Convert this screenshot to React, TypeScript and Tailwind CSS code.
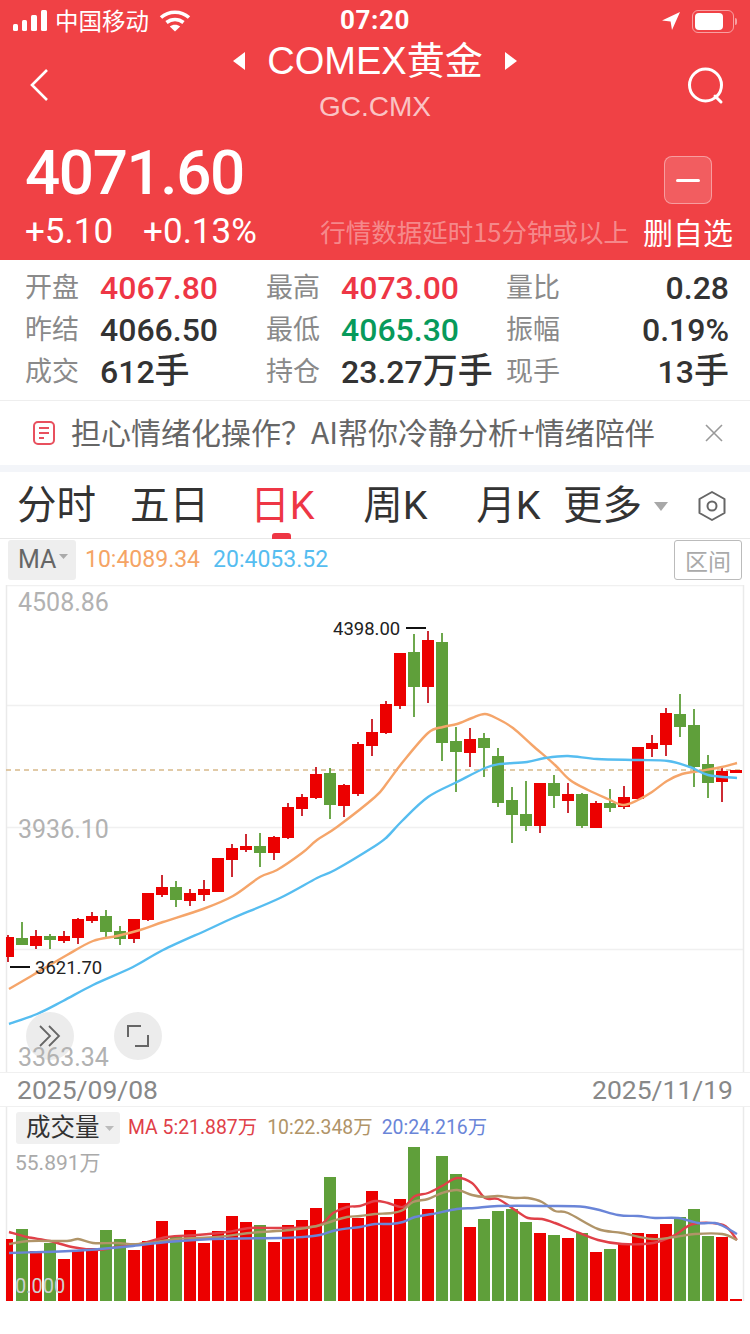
import React from "react";

const RED = "#ec0000";
const GREEN = "#5f9f3a";

// x = 8 + 14 * index; [up, wickTop, bodyTop, bodyBottom, wickBottom]
const candles: [number, number, number, number, number][] = [
  [1, 935, 937, 957, 962], [0, 922, 938, 945, 945], [1, 930, 936, 946, 949], [0, 934, 936, 940, 949],
  [1, 931, 936, 941, 943], [1, 918, 919, 938, 944], [1, 912, 916, 921, 923], [0, 910, 916, 932, 937],
  [0, 926, 931, 939, 945], [1, 919, 919, 939, 943], [1, 893, 893, 920, 921], [1, 875, 887, 895, 897],
  [0, 881, 887, 900, 907], [1, 889, 893, 901, 906], [1, 880, 889, 895, 901], [1, 858, 858, 892, 892],
  [1, 844, 848, 860, 877], [1, 834, 846, 850, 852], [0, 833, 846, 853, 867], [1, 836, 837, 853, 860],
  [1, 803, 807, 838, 839], [1, 794, 797, 809, 816], [1, 767, 774, 798, 799], [0, 768, 773, 805, 819],
  [1, 784, 785, 806, 817], [1, 742, 744, 794, 796], [1, 719, 732, 746, 756], [1, 701, 704, 733, 734],
  [1, 653, 653, 706, 709], [0, 634, 652, 687, 717], [1, 631, 640, 687, 703], [0, 633, 642, 743, 761],
  [0, 727, 741, 752, 792], [1, 728, 739, 753, 767], [0, 733, 738, 748, 777], [0, 748, 756, 803, 807],
  [0, 787, 800, 815, 843], [0, 781, 814, 826, 831], [1, 783, 783, 826, 833], [0, 775, 783, 796, 808],
  [1, 783, 794, 801, 813], [0, 793, 794, 826, 828], [1, 801, 803, 828, 828], [0, 789, 803, 808, 812],
  [1, 786, 797, 807, 809], [1, 747, 747, 799, 800], [1, 735, 743, 749, 757], [1, 708, 713, 745, 756],
  [0, 694, 714, 727, 737], [0, 709, 725, 767, 787], [0, 755, 764, 783, 798], [1, 766, 771, 782, 802],
  [1, 770, 770, 773, 773],
];

// [up, top]; every bar ends on y = 1301
const volumes: [number, number][] = [
  [1, 1239], [0, 1229], [1, 1251], [0, 1243], [1, 1259], [1, 1250], [1, 1248], [0, 1230], [0, 1239],
  [1, 1250], [1, 1241], [1, 1221], [0, 1236], [1, 1230], [1, 1243], [1, 1231], [1, 1216], [1, 1222],
  [0, 1225], [1, 1242], [1, 1225], [1, 1220], [1, 1208], [0, 1177], [1, 1203], [1, 1218], [1, 1191],
  [1, 1217], [1, 1199], [0, 1147], [1, 1209], [0, 1156], [0, 1174], [1, 1227], [0, 1219], [0, 1211],
  [0, 1209], [0, 1222], [1, 1233], [0, 1235], [1, 1238], [0, 1233], [1, 1252], [0, 1249], [1, 1244],
  [1, 1233], [1, 1234], [1, 1224], [0, 1217], [0, 1209], [0, 1236], [1, 1237], [1, 1299],
];

const ma10 =
  "9,989 33,975 67,955 93,941 117,936 140,930 163,922 203,909 233,896 260,877 277,870 302,853 317,840 337,827 375,797 387,783 402,763 428,733 443,727 457,724 472,718 485,714 498,719 513,728 532,745 555,765 570,780 588,790 608,799 623,805 638,800 652,792 667,781 682,774 700,771 722,767 737,763";
const ma20 =
  "9,1024 37,1014 63,1001 93,985 133,967 163,950 207,930 233,918 280,898 317,878 335,870 375,846 387,837 402,821 428,797 457,782 485,768 500,764 527,762 545,758 568,756 597,759 638,760 668,761 690,767 708,775 737,778";

const vol5 =
  "9,1232 27,1237 50,1241 72,1247 97,1250 117,1247 140,1244 167,1237 197,1235 227,1232 250,1228 277,1228 317,1226 333,1213 347,1207 360,1206 375,1201 388,1203 403,1207 415,1196 428,1193 442,1186 457,1178 472,1183 485,1198 498,1199 515,1210 528,1218 542,1219 555,1223 572,1230 598,1240 622,1244 653,1243 675,1235 693,1224 723,1225 737,1240";
const vol10 =
  "9,1244 30,1241 67,1241 78,1239 93,1243 117,1243 140,1244 177,1239 217,1237 250,1233 290,1230 317,1226 333,1221 347,1217 360,1216 375,1214 392,1213 403,1210 413,1202 428,1199 442,1193 457,1190 472,1195 485,1197 498,1196 515,1198 528,1198 542,1202 555,1211 568,1213 598,1229 622,1233 652,1239 675,1237 695,1234 722,1234 737,1240";
const vol20 =
  "9,1253 43,1252 70,1251 100,1249 133,1246 167,1242 213,1239 280,1238 303,1237 320,1235 337,1230 360,1227 375,1224 390,1224 403,1222 415,1217 432,1214 457,1209 475,1208 498,1206 542,1206 585,1207 618,1215 638,1216 655,1218 678,1218 698,1223 715,1223 725,1227 737,1234";

// catmull-rom through the read-off points so the averages don't look kinked
function smooth(points: string) {
  const p = points.split(" ").map((s) => s.split(",").map(Number));
  let d = `M${p[0][0]} ${p[0][1]}`;
  for (let i = 0; i < p.length - 1; i++) {
    const a = p[Math.max(i - 1, 0)];
    const b = p[i];
    const c = p[i + 1];
    const e = p[Math.min(i + 2, p.length - 1)];
    const c1x = b[0] + (c[0] - a[0]) / 6;
    const c1y = b[1] + (c[1] - a[1]) / 6;
    const c2x = c[0] - (e[0] - b[0]) / 6;
    const c2y = c[1] - (e[1] - b[1]) / 6;
    d += `C${c1x.toFixed(1)} ${c1y.toFixed(1)} ${c2x.toFixed(1)} ${c2y.toFixed(1)} ${c[0]} ${c[1]}`;
  }
  return d;
}

const priceLabel = "absolute left-[18px] font-['Roboto'] text-[25px] leading-[30px] text-[#b2b2b2]";

function StatusBar() {
  return (
    <div className="relative flex h-[42px] items-center justify-between pl-[13px] pr-[13px] text-white">
      <div className="flex items-center gap-[8px]">
        <svg width="34" height="22" viewBox="0 0 34 22" fill="white">
          <rect x="0" y="14" width="5" height="7" rx="1.5" />
          <rect x="9" y="10" width="5" height="11" rx="1.5" />
          <rect x="18" y="5" width="6" height="16" rx="1.5" />
          <rect x="28" y="0" width="6" height="21" rx="1.5" />
        </svg>
        <span className="pb-[3px] font-['Noto_Sans_CJK_SC'] text-[23.5px] leading-[30px]">中国移动</span>
        <svg width="32" height="22" viewBox="0 0 32 22" fill="none" stroke="white" strokeWidth="3.6" className="ml-[2px]">
          <path d="M2 7.5C10 .5 22 .5 30 7.5" />
          <path d="M7.5 12.5C12.5 8.5 19.5 8.5 24.5 12.5" />
          <path d="M16 21.5L10.8 16.5C13.8 14 18.2 14 21.2 16.5Z" fill="white" stroke="none" />
        </svg>
      </div>
      <span className="absolute left-[340px] top-[5px] w-[70px] text-center font-['Roboto'] text-[26px] font-bold leading-[30px] tracking-[0.6px]">
        07:20
      </span>
      <div className="flex items-center gap-[12px]">
        <svg width="18" height="18" viewBox="0 0 18 18" fill="white">
          <path d="M18 0L0 8.5L8.6 9.4L10 18Z" />
        </svg>
        <div className="flex items-center gap-[1px]">
          <div className="flex h-[23px] w-[42px] items-center rounded-[6px] border-[1.5px] border-white/50 p-[2px]">
            <div className="h-full w-[28px] rounded-[4px] bg-white" />
          </div>
          <div className="h-[7px] w-[2px] rounded-r-[2px] bg-white/50" />
        </div>
      </div>
    </div>
  );
}

function NavBar() {
  return (
    <div className="relative flex h-[84px] items-start justify-between pl-[30px] pr-[25px] text-white">
      <svg width="18" height="32" viewBox="0 0 18 32" fill="none" stroke="white" strokeWidth="2.6" className="mt-[27px]">
        <path d="M17 1L2 16L17 31" />
      </svg>
      <div className="absolute left-0 right-0 top-0 flex flex-col items-center">
        <div className="flex items-center gap-[22px]">
          <svg width="12" height="18" viewBox="0 0 12 18" fill="white"><path d="M12 0V18L0 9Z" /></svg>
          <span className="font-['Liberation_Sans','Noto_Sans_CJK_SC',sans-serif] text-[38px] leading-[38px]">COMEX黄金</span>
          <svg width="12" height="18" viewBox="0 0 12 18" fill="white"><path d="M0 0V18L12 9Z" /></svg>
        </div>
        <span className="mt-[12px] font-['Liberation_Sans',sans-serif] text-[28px] leading-[30px] text-white/70">GC.CMX</span>
      </div>
      <svg width="38" height="38" viewBox="0 0 38 38" fill="none" stroke="white" strokeWidth="3" className="mt-[25px]">
        <circle cx="18.5" cy="18" r="16" />
        <path d="M28 29L34 35" strokeLinecap="round" />
      </svg>
    </div>
  );
}

function QuoteRow() {
  return (
    <div className="flex h-[134px] items-start justify-between pl-[25px] pr-[17px] text-white">
      <div className="flex flex-col pt-[12px]">
        <span className="font-['Roboto'] text-[62px] font-medium leading-[70px] tracking-[-1.4px]">4071.60</span>
        <div className="mt-[4px] flex gap-[30px] font-['Roboto'] text-[35px] leading-[40px]">
          <span>+5.10</span>
          <span>+0.13%</span>
        </div>
      </div>
      <div className="flex flex-col items-end">
        <div className="mr-[21px] mt-[30px] flex h-[48px] w-[48px] items-center justify-center rounded-[8px] border border-white/40 bg-white/15">
          <div className="h-[3px] w-[24px] rounded-full bg-white" />
        </div>
        <div className="mt-[8px] flex items-center gap-[14px] font-['Noto_Sans_CJK_SC']">
          <span className="text-[25.5px] leading-[38px] text-white/40">行情数据延时15分钟或以上</span>
          <span className="text-[30px] leading-[38px]">删自选</span>
        </div>
      </div>
    </div>
  );
}

const stats = [
  ["开盘", "4067.80", "", "text-[#ee3645]", "最高", "4073.00", "", "text-[#ee3645]", "量比", "0.28", ""],
  ["昨结", "4066.50", "", "text-[#333333]", "最低", "4065.30", "", "text-[#079a5b]", "振幅", "0.19%", ""],
  ["成交", "612", "手", "text-[#333333]", "持仓", "23.27", "万手", "text-[#333333]", "现手", "13", "手"],
];

function Stats() {
  const label = "text-[27px] font-normal text-[#8a8a8a]";
  const unit = "text-[35px]";
  return (
    <div className="grid h-[141px] grid-cols-[75px_166px_75px_165px_1fr_auto] content-center border-b border-[#eeeeee] pl-[25px] pr-[21px] font-['Roboto','Noto_Sans_CJK_SC',sans-serif] text-[32px] font-medium leading-[42px]">
      {stats.map((r) => (
        <React.Fragment key={r[0]}>
          <span className={label}>{r[0]}</span>
          <span className={r[3]}>{r[1]}<span className={unit}>{r[2]}</span></span>
          <span className={label}>{r[4]}</span>
          <span className={r[7]}>{r[5]}<span className={unit}>{r[6]}</span></span>
          <span className={label}>{r[8]}</span>
          <span className="text-right text-[#333333]">{r[9]}<span className={unit}>{r[10]}</span></span>
        </React.Fragment>
      ))}
    </div>
  );
}

function Banner() {
  return (
    <div className="flex h-[64px] items-center justify-between pl-[33px] pr-[27px]">
      <div className="flex items-center gap-[16px]">
        <svg width="22" height="24" viewBox="0 0 22 24" fill="none" stroke="#e8505e" strokeWidth="2">
          <rect x="1" y="1" width="20" height="22" rx="4" />
          <path d="M6 7H16M6 12H16M6 17H11" />
        </svg>
        <span className="pb-[4px] font-['Noto_Sans_CJK_SC'] text-[30px] leading-[40px] text-[#666666]">担心情绪化操作？AI帮你冷静分析+情绪陪伴</span>
      </div>
      <svg width="18" height="18" viewBox="0 0 18 18" stroke="#999999" strokeWidth="1.6"><path d="M1 1L17 17M17 1L1 17" /></svg>
    </div>
  );
}

function Tabs() {
  const items = ["分时", "五日", "日K", "周K", "月K"];
  return (
    <div className="flex h-[67px] items-center border-b border-[#e8e8e8] pt-[1px] font-['Roboto','Noto_Sans_CJK_SC',sans-serif] text-[39.5px] leading-[50px] text-[#333333]">
      {items.map((t) => (
        <div key={t} className={t === "日K" ? "relative w-[113px] text-center text-[#ee3645]" : "w-[113px] text-center"}>
          {t}
          {t === "日K" && <div className="absolute bottom-[-8px] left-[46px] h-[6px] w-[19px] rounded-t-[3px] bg-[#ee3645]" />}
        </div>
      ))}
      <span className="-ml-[2px]">更多</span>
      <svg width="14" height="9" viewBox="0 0 14 9" fill="#a8a8a8" className="ml-[12px] mt-[2px]"><path d="M0 0H14L7 9Z" /></svg>
      <svg width="30" height="32" viewBox="0 0 30 32" fill="none" stroke="#666666" strokeWidth="2" className="ml-[29px]">
        <path d="M15 2L27.5 9V23L15 30L2.5 23V9Z" strokeLinejoin="round" />
        <circle cx="15" cy="16" r="4.5" />
      </svg>
    </div>
  );
}

function MaRow() {
  return (
    <div className="flex h-[46px] items-center justify-between pb-[4px] pl-[8px] pr-[8px] font-['Roboto'] text-[23px] leading-[30px]">
      <div className="flex items-center">
        <div className="flex h-[40px] w-[68px] items-center gap-[3px] rounded-[3px] bg-[#eeeeee] pb-[1px] pl-[10px] text-[25px] text-[#666666]">
          MA
          <svg width="9" height="5" viewBox="0 0 9 5" fill="#aaaaaa" className="mb-[6px]"><path d="M0 0H9L4.5 5Z" /></svg>
        </div>
        <span className="ml-[9px] text-[#f5a465]">10:4089.34</span>
        <span className="ml-[13px] text-[#56bdf0]">20:4053.52</span>
      </div>
      <div className="flex h-[40px] w-[68px] items-center justify-center rounded-[3px] border border-[#bbbbbb] font-['Noto_Sans_CJK_SC'] text-[23px] text-[#aaaaaa]">
        区间
      </div>
    </div>
  );
}

function PriceChart() {
  return (
    <div className="relative h-[487px] w-full">
      <svg width="750" height="487" viewBox="0 585 750 487" className="absolute left-0 top-0">
        <path d="M6 585.5H744M6 705.5H744M6 827.5H744M6 949.5H744" stroke="#f0f0f0" strokeWidth="1.5" />
        <path d="M6.5 585V1072M743.5 585V1072" stroke="#eaeaea" strokeWidth="1.5" />
        <path d="M6 770H744" stroke="#d7b98a" strokeWidth="1.5" strokeDasharray="5 4" />
        {candles.map((c, i) => {
          const x = 8 + 14 * i;
          const fill = c[0] ? RED : GREEN;
          const wick = c[0] ? "#c8141e" : GREEN;
          return (
            <g key={i}>
              <rect x={x - 0.9} y={c[1]} width="1.8" height={c[4] - c[1]} fill={wick} />
              <rect x={i === 0 ? 6 : x - 6} y={c[2]} width={i === 0 ? 8 : 12} height={c[3] - c[2]} fill={fill} />
            </g>
          );
        })}
        <path d={smooth(ma10)} fill="none" stroke="#f5a56a" strokeWidth="2.4" />
        <path d={smooth(ma20)} fill="none" stroke="#56bdf0" strokeWidth="2.4" />
        <path d="M406 628H426M10 967H30" stroke="#111111" strokeWidth="2" />
      </svg>
      <div className="absolute left-[26px] top-[427px] flex h-[48px] w-[48px] items-center justify-center rounded-full bg-[#ececec]">
        <svg width="22" height="22" viewBox="0 0 22 22" fill="none" stroke="#666666" strokeWidth="1.8">
          <path d="M1 1L11 11L1 21M10 1L20 11L10 21" />
        </svg>
      </div>
      <div className="absolute left-[114px] top-[427px] flex h-[48px] w-[48px] items-center justify-center rounded-full bg-[#ececec]">
        <svg width="22" height="22" viewBox="0 0 22 22" fill="none" stroke="#666666" strokeWidth="2">
          <path d="M1 12V1H14M21 10V21H8" />
        </svg>
      </div>
      <span className={`${priceLabel} top-[3px]`}>4508.86</span>
      <span className={`${priceLabel} top-[230px]`}>3936.10</span>
      <span className={`${priceLabel} top-[458px]`}>3363.34</span>
      <span className="absolute left-[333px] top-[32px] font-['Roboto'] text-[18.5px] leading-[24px] text-[#222222]">4398.00</span>
      <span className="absolute left-[35px] top-[371px] font-['Roboto'] text-[18.5px] leading-[24px] text-[#222222]">3621.70</span>
    </div>
  );
}

function DateRow() {
  return (
    <div className="flex h-[35px] items-center justify-between border-y border-[#f0f0f0] pl-[17px] pr-[17px] pt-[1px] font-['Roboto'] text-[26.5px] leading-[30px] text-[#888888]">
      <span>2025/09/08</span>
      <span>2025/11/19</span>
    </div>
  );
}

function VolumeChart() {
  return (
    <div className="relative h-[194px] w-full">
      <svg width="750" height="194" viewBox="0 1107 750 194" className="absolute left-0 top-0">
        <path d="M6.5 1107V1301M743.5 1107V1301" stroke="#eaeaea" strokeWidth="1.5" />
        {volumes.map((v, i) => {
          const x = 8 + 14 * i;
          return (
            <rect key={i} x={i === 0 ? 6 : x - 6} y={v[1]} width={i === 0 ? 7 : 12} height={1301 - v[1]} fill={v[0] ? RED : GREEN} />
          );
        })}
        <path d={smooth(vol5)} fill="none" stroke="#e04048" strokeWidth="2.4" />
        <path d={smooth(vol10)} fill="none" stroke="#b09468" strokeWidth="2.4" />
        <path d={smooth(vol20)} fill="none" stroke="#6a85d8" strokeWidth="2.4" />
      </svg>
      <div className="relative flex items-center pl-[16px] pt-[5px] font-['Roboto','Noto_Sans_CJK_SC',sans-serif] text-[19.4px] leading-[28px]">
        <div className="flex h-[32px] w-[104px] items-center gap-[5px] rounded-[3px] bg-[#f0f0f0] pl-[10px] text-[24.5px] text-[#333333]">
          成交量
          <svg width="9" height="5" viewBox="0 0 9 5" fill="#bbbbbb"><path d="M0 0H9L4.5 5Z" /></svg>
        </div>
        <span className="ml-[8px] text-[#e04048]">MA 5:21.887万</span>
        <span className="ml-[10px] text-[#b09468]">10:22.348万</span>
        <span className="ml-[9px] text-[#6a85d8]">20:24.216万</span>
      </div>
      <span className="absolute left-[15px] top-[42px] font-['Roboto','Noto_Sans_CJK_SC',sans-serif] text-[21px] leading-[28px] text-[#aaaaaa]">55.891万</span>
      <span className="absolute left-[15px] top-[165px] font-['Roboto'] text-[20px] leading-[28px] text-[#d0d0d0]">0.000</span>
    </div>
  );
}

export default function App() {
  return (
    <div className="h-[1334px] w-[750px] overflow-hidden bg-white">
      <div className="bg-[#f04145]">
        <StatusBar />
        <NavBar />
        <QuoteRow />
      </div>
      <Stats />
      <Banner />
      <div className="h-[7px] bg-[#f3f5f9]" />
      <Tabs />
      <MaRow />
      <PriceChart />
      <DateRow />
      <VolumeChart />
    </div>
  );
}
